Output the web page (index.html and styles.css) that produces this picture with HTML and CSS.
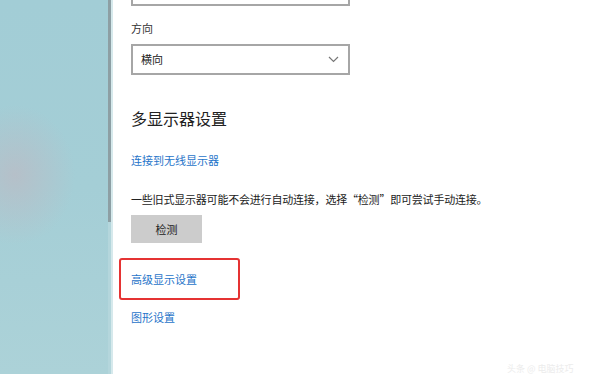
FILE: index.html
```html
<!DOCTYPE html>
<html lang="zh-CN">
<head>
<meta charset="utf-8">
<link rel="stylesheet" href="styles.css">
</head>
<body>
<div class="screen">
  <div class="wall"></div>
  <div class="scroll"><div class="thumb"></div></div>
  <div class="edge"></div>
  <main class="panel">
    <div class="topbox"></div>
    <div class="label">方向</div>
    <div class="select">
      <span class="select-text">横向</span>
      <svg class="chev" width="11" height="7" viewBox="0 0 11 7"><path d="M1 1 L5.5 5.5 L10 1" fill="none" stroke="#777" stroke-width="1.2"/></svg>
    </div>
    <h2 class="heading">多显示器设置</h2>
    <a class="link link-wireless">连接到无线显示器</a>
    <p class="desc">一些旧式显示器可能不会进行自动连接，选择“检测”即可尝试手动连接。</p>
    <div class="btn">检测</div>
    <div class="highlight"><a class="link">高级显示设置</a></div>
    <a class="link link-graphics">图形设置</a>
    <div class="watermark">头条 @ 电脑技巧</div>
  </main>
</div>
</body>
</html>
```
FILE: styles.css
```css
* { box-sizing: border-box; }
html, body { margin: 0; padding: 0; }
body {
  width: 592px;
  height: 374px;
  overflow: hidden;
  font-family: "Noto Sans CJK SC", "Noto Sans", sans-serif;
  background: #fff;
}
.screen {
  display: flex;
  height: 374px;
}
.wall {
  width: 108px;
  flex: none;
  background:
    radial-gradient(ellipse 60px 70px at 15px 175px, rgba(196, 180, 190, 0.55), rgba(196, 180, 190, 0) 100%),
    linear-gradient(180deg, #a2cdd6 0%, #a4ced6 50%, #acd2d8 100%);
}
.scroll {
  width: 3px;
  flex: none;
  background: #b4d6dc;
}
.thumb {
  height: 222px;
  background: #8d9fa4;
}
.edge {
  width: 2px;
  flex: none;
  background: #d6e9ec;
}
.panel {
  flex: 1;
  background: #fff;
  padding-left: 18px;
  display: flex;
  flex-direction: column;
  align-items: flex-start;
}
.topbox {
  width: 219px;
  height: 6px;
  border: 2px solid #a6a6a6;
  border-top: none;
}
.label {
  margin-top: 15px;
  font-size: 11px;
  line-height: 14px;
  color: #333;
}
.select {
  margin-top: 9px;
  width: 219px;
  height: 31px;
  border: 2px solid #a6a6a6;
  display: flex;
  align-items: center;
  justify-content: space-between;
  padding: 0 9px 0 8px;
}
.select-text {
  font-size: 11px;
  color: #222;
}
.chev { display: block; }
.heading {
  margin: 32px 0 0 0;
  font-size: 16px;
  line-height: 22px;
  font-weight: normal;
  color: #222;
}
.link {
  font-size: 11px;
  line-height: 14px;
  color: #1f74c9;
  display: block;
}
.link-wireless { margin-top: 24px; }
.desc {
  margin: 25px 0 0 0;
  font-size: 11px;
  line-height: 14px;
  color: #222;
  letter-spacing: -0.2px;
}
.btn {
  margin-top: 9px;
  width: 71px;
  height: 29px;
  background: #cccccc;
  display: flex;
  align-items: center;
  justify-content: center;
  font-size: 11px;
  color: #222;
}
.highlight {
  margin-top: 15px;
  margin-left: -12px;
  width: 121px;
  height: 42px;
  border: 2px solid #e53333;
  border-radius: 3px;
  padding-left: 10px;
  display: flex;
  align-items: center;
}
.link-graphics { margin-top: 10px; }
.watermark {
  margin-top: 40px;
  margin-left: 376px;
  font-size: 9px;
  line-height: 10px;
  color: #ececec;
  white-space: nowrap;
}
```
